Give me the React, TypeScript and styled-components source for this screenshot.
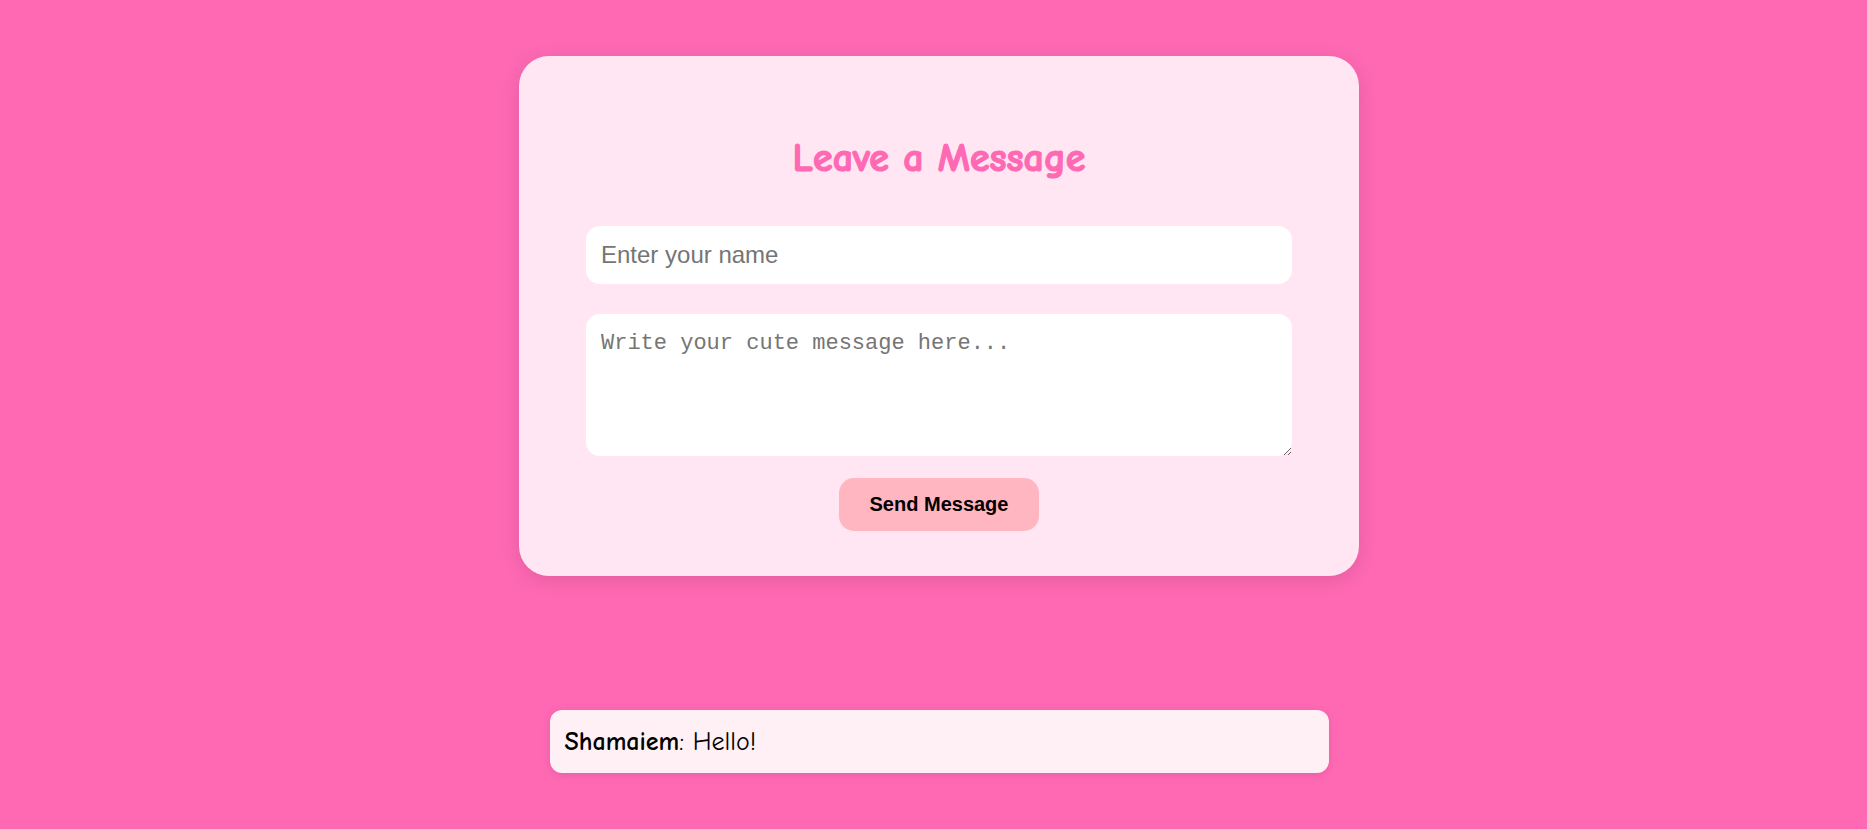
import React, { useState } from 'react';
import styled, { createGlobalStyle } from 'styled-components';

const GlobalStyle = createGlobalStyle`
  html, body {
    margin: 0;
    padding: 0;
    background-color: #ff69b4;
    font-family: "Comic Sans MS", "Comic Neue", Lato, cursive;
  }
`;

const Page = styled.div`
  min-height: 829px;
  box-sizing: border-box;
  padding: 56px 0 0 11px;
  display: flex;
  flex-direction: column;
  align-items: center;
`;

const FormCard = styled.div`
  width: 840px;
  box-sizing: border-box;
  padding: 40px 67px 45px;
  background-color: #ffe6f2;
  border-radius: 30px;
  box-shadow: 0 4px 20px rgba(0, 0, 0, 0.12);
  display: flex;
  flex-direction: column;
  align-items: center;
`;

const Title = styled.h2`
  margin: 38px 0 44px;
  font-family: "Comic Sans MS", "Comic Neue", Lato, cursive;
  font-size: 40px;
  line-height: 48px;
  font-weight: 700;
  color: #ff69b4;
  -webkit-text-stroke: 1.2px #ff69b4;
`;

const NameInput = styled.input`
  width: 100%;
  height: 58px;
  box-sizing: border-box;
  padding: 0 15px;
  border: none;
  border-radius: 14px;
  background: #ffffff;
  font-family: "Liberation Sans", Arial, sans-serif;
  font-size: 24px;
  color: #333;
  outline: none;

  &::placeholder {
    color: #757575;
  }
`;

const MessageArea = styled.textarea`
  width: 100%;
  height: 142px;
  box-sizing: border-box;
  margin-top: 30px;
  padding: 17px 15px;
  border: none;
  border-radius: 14px;
  background: #ffffff;
  font-family: "Liberation Mono", "DejaVu Sans Mono", monospace;
  font-size: 22px;
  color: #333;
  outline: none;

  &::placeholder {
    color: #757575;
  }
`;

const SendButton = styled.button`
  margin-top: 22px;
  padding: 15px 31px;
  border: none;
  border-radius: 15px;
  background-color: #ffb6c1;
  color: #000;
  font-family: "Liberation Sans", Arial, sans-serif;
  font-size: 20px;
  font-weight: 700;
  line-height: 23px;
  cursor: pointer;
`;

const MessageList = styled.div`
  margin-top: 134px;
  width: 779px;
  display: flex;
  flex-direction: column;
  gap: 12px;
`;

const MessageItem = styled.div`
  height: 63px;
  box-sizing: border-box;
  padding: 0 15px;
  display: flex;
  align-items: center;
  background-color: #fff0f5;
  border-radius: 12px;
  box-shadow: 0 2px 8px rgba(0, 0, 0, 0.1);
  font-size: 26px;
  color: #000;
`;

const Author = styled.strong`
  font-weight: 700;
`;

type Message = { id: number; name: string; text: string };

const App: React.FC = () => {
  const [name, setName] = useState('');
  const [text, setText] = useState('');
  const [messages, setMessages] = useState<Message[]>([
    { id: 1, name: 'Shamaiem', text: 'Hello!' },
  ]);

  const handleSend = () => {
    if (name.trim() === '' || text.trim() === '') return;
    setMessages([...messages, { id: Date.now(), name, text }]);
    setName('');
    setText('');
  };

  return (
    <>
      <GlobalStyle />
      <Page>
        <FormCard>
          <Title>Leave a Message</Title>
          <NameInput
            value={name}
            onChange={(e) => setName(e.target.value)}
            placeholder="Enter your name"
          />
          <MessageArea
            value={text}
            onChange={(e) => setText(e.target.value)}
            placeholder="Write your cute message here..."
          />
          <SendButton onClick={handleSend}>Send Message</SendButton>
        </FormCard>

        <MessageList>
          {messages.map((m) => (
            <MessageItem key={m.id}>
              <span>
                <Author>{m.name}</Author>: {m.text}
              </span>
            </MessageItem>
          ))}
        </MessageList>
      </Page>
    </>
  );
};

export default App;
